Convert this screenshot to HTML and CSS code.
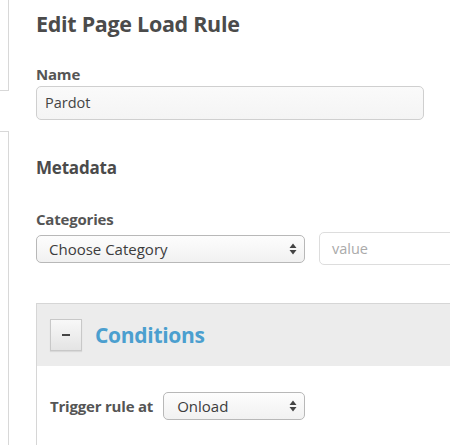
FILE: index.html
```html
<!DOCTYPE html>
<html>
<head>
<meta charset="utf-8">
<link rel="stylesheet" href="styles.css">
</head>
<body>
<div class="page">
  <div class="side">
    <div class="side-box top"></div>
    <div class="side-box bottom"></div>
  </div>
  <div class="main">
    <h1 class="title">Edit Page Load Rule</h1>
    <label class="label name-label">Name</label>
    <div class="input name-input">Pardot</div>
    <h2 class="section">Metadata</h2>
    <label class="label cat-label">Categories</label>
    <div class="cat-row">
      <div class="select cat-select"><span>Choose Category</span><span class="arrows"><svg width="8" height="12" viewBox="0 0 8 12"><path d="M4 0.5 L7.5 5 H0.5 Z M4 11.5 L7.5 7 H0.5 Z" fill="#444"/></svg></span></div>
      <div class="input value-input">value</div>
    </div>
    <div class="panel">
      <div class="panel-head">
        <div class="toggle"><span class="dash"></span></div>
        <div class="panel-title">Conditions</div>
      </div>
      <div class="panel-body">
        <span class="label trig-label">Trigger rule at</span>
        <div class="select trig-select"><span>Onload</span><span class="arrows"><svg width="8" height="12" viewBox="0 0 8 12"><path d="M4 0.5 L7.5 5 H0.5 Z M4 11.5 L7.5 7 H0.5 Z" fill="#444"/></svg></span></div>
      </div>
    </div>
  </div>
</div>
</body>
</html>
```

FILE: styles.css
```css
* { box-sizing: border-box; }
html, body { margin: 0; padding: 0; background: #fff; }
body {
  font-family: "Open Sans", "Noto Sans", sans-serif;
  color: #4b4b4b;
  width: 450px;
  height: 445px;
  overflow: hidden;
}
.page { display: flex; height: 445px; }
.side { width: 9px; flex: none; display: flex; flex-direction: column; }
.side-box { border-right: 1px solid #d8d8d8; }
.side-box.top { height: 91px; border-bottom: 1px solid #d8d8d8; }
.side-box.bottom { margin-top: 40px; flex: 1; border-top: 1px solid #d8d8d8; }
.main { flex: 1; padding-left: 27px; min-width: 0; }
.title {
  margin: 0; padding-top: 10px;
  font-size: 21.5px; line-height: 28px; font-weight: 700; letter-spacing: -0.3px;
  color: #4b4b4b;
}
.label { display: block; font-size: 15px; font-weight: 700; color: #555; letter-spacing: -0.2px; }
.name-label { margin-top: 27px; line-height: 18px; }
.input {
  border: 1px solid #cfcfcf; border-radius: 5px;
  background: linear-gradient(#fafafa, #f4f4f4);
  font-size: 14.5px; color: #444;
}
.name-input {
  margin-top: 3px; width: 388px; height: 34px;
  padding: 0 8px; line-height: 32px;
}
.section {
  margin: 37px 0 0; font-size: 17px; line-height: 22px; font-weight: 700; color: #4b4b4b; letter-spacing: -0.2px;
}
.cat-label { margin-top: 30px; line-height: 20px; }
.cat-row { display: flex; align-items: center; gap: 14px; margin-top: 3px; }
.select {
  display: flex; align-items: center; justify-content: space-between;
  border: 1px solid #b8b8b8; border-radius: 5px;
  background: linear-gradient(#fdfdfd, #f1f1f1);
  font-size: 15px; color: #3c3c3c;
  padding: 0 7px 0 12px;
  flex: none;
}
.arrows { display: flex; }
.cat-select { width: 269px; height: 28px; }
.value-input {
  width: 150px; height: 33px; flex: none;
  padding: 0 12px; line-height: 31px; color: #aaa; background: #fff; border-color: #ddd;
}
.panel {
  margin-top: 38px; border-top: 1px solid #d6d6d6; border-left: 1px solid #d6d6d6;
  margin-right: -10px;
}
.panel-head {
  height: 62px; background: #ececec; display: flex; align-items: center;
  padding-left: 13px;
}
.toggle {
  width: 32px; height: 32px; border: 1px solid #c8c8c8;
  background: linear-gradient(#f8f8f8, #e4e4e4);
  display: flex; align-items: center; justify-content: center;
  box-shadow: 0 1px 1px rgba(0,0,0,0.08);
}
.dash { width: 8px; height: 2px; background: #444; }
.panel-title {
  margin-left: 13px; font-size: 21px; font-weight: 700; color: #4b9fcf; letter-spacing: -0.3px;
}
.panel-body { display: flex; align-items: center; padding: 26px 0 40px 13px; }
.trig-label { display: inline; }
.trig-select { margin-left: 10px; width: 142px; height: 28px; padding-left: 13px; }
```
